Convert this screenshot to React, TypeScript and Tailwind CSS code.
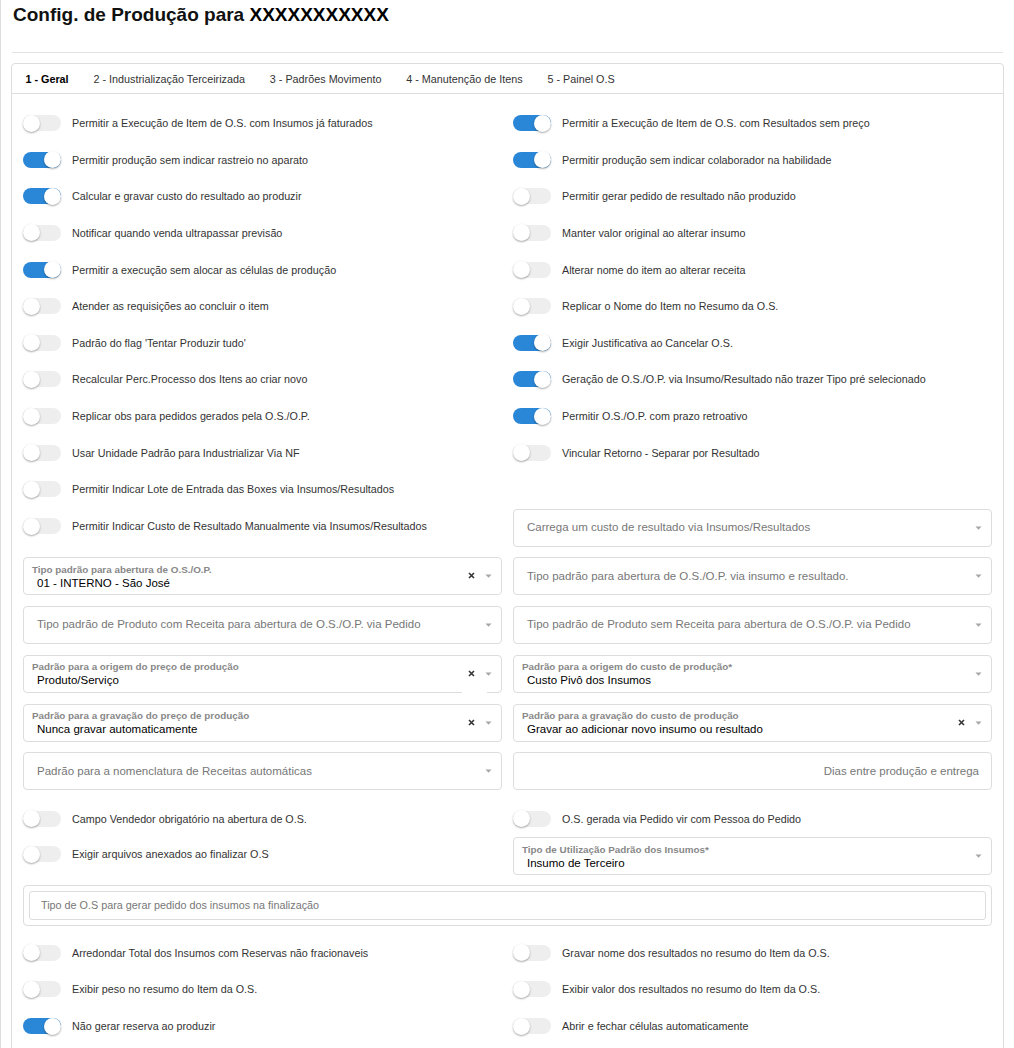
import React from 'react';

type Opt = { on?: boolean; text: string };

function Toggle({ on }: { on?: boolean }) {
  return (
    <span
      className={`relative inline-block h-4 w-[38px] shrink-0 rounded-full ${on ? 'bg-[#2a87d7]' : 'bg-[#eeeeee]'}`}
    >
      <span
        className={`absolute top-[-0.5px] h-[17px] w-[17px] rounded-full bg-white shadow-[0_1px_2px_rgba(0,0,0,0.35)] ${on ? 'right-0' : 'left-0'}`}
      />
    </span>
  );
}

function ToggleItem({ on, text }: Opt) {
  return (
    <div className="flex items-center gap-[11px]">
      <Toggle on={on} />
      <span className="text-[10.75px] leading-[14px] text-[#333]">{text}</span>
    </div>
  );
}

function Caret() {
  return (
    <svg width="7" height="4" viewBox="0 0 7 4" className="shrink-0">
      <path d="M0.5 0.5h6L3.5 3.8z" fill="#a6a6a6" />
    </svg>
  );
}

function Clear() {
  return (
    <svg width="7" height="7" viewBox="0 0 7 7" className="shrink-0">
      <path d="M1 1l5 5M6 1L1 6" stroke="#333" strokeWidth="1.6" />
    </svg>
  );
}

function Select({
  label,
  value,
  placeholder,
  clear,
  patch,
}: {
  label?: string;
  value?: string;
  placeholder?: string;
  clear?: boolean;
  patch?: boolean;
}) {
  return (
    <div className="relative flex h-[38px] items-center rounded-[4px] border border-[#dddddd] bg-white pr-[9px]">
      {label ? (
        <div className="flex min-w-0 flex-1 flex-col pt-[1px]">
          <span className="pl-[8px] text-[9.85px] font-bold leading-[12px] text-[#888]">{label}</span>
          <span className="pl-[13px] text-[11.5px] leading-[14px] text-black">{value}</span>
        </div>
      ) : (
        <span className="flex-1 pl-[13px] text-[11.5px] text-[#777]">{placeholder}</span>
      )}
      {clear && (
        <span className="mr-[10px] mt-[-1px] flex">
          <Clear />
        </span>
      )}
      <Caret />
      {patch && <div className="absolute bottom-[-1px] right-[14px] h-[3px] w-[25px] bg-white" />}
    </div>
  );
}

function Row({ children, className = '' }: { children: React.ReactNode; className?: string }) {
  return <div className={`grid grid-cols-2 gap-x-[11px] ${className}`}>{children}</div>;
}

const left: Opt[] = [
  { text: 'Permitir a Execução de Item de O.S. com Insumos já faturados' },
  { on: true, text: 'Permitir produção sem indicar rastreio no aparato' },
  { on: true, text: 'Calcular e gravar custo do resultado ao produzir' },
  { text: 'Notificar quando venda ultrapassar previsão' },
  { on: true, text: 'Permitir a execução sem alocar as células de produção' },
  { text: 'Atender as requisições ao concluir o item' },
  { text: "Padrão do flag 'Tentar Produzir tudo'" },
  { text: 'Recalcular Perc.Processo dos Itens ao criar novo' },
  { text: 'Replicar obs para pedidos gerados pela O.S./O.P.' },
  { text: 'Usar Unidade Padrão para Industrializar Via NF' },
  { text: 'Permitir Indicar Lote de Entrada das Boxes via Insumos/Resultados' },
];

const right: (Opt | null)[] = [
  { on: true, text: 'Permitir a Execução de Item de O.S. com Resultados sem preço' },
  { on: true, text: 'Permitir produção sem indicar colaborador na habilidade' },
  { text: 'Permitir gerar pedido de resultado não produzido' },
  { text: 'Manter valor original ao alterar insumo' },
  { text: 'Alterar nome do item ao alterar receita' },
  { text: 'Replicar o Nome do Item no Resumo da O.S.' },
  { on: true, text: 'Exigir Justificativa ao Cancelar O.S.' },
  { on: true, text: 'Geração de O.S./O.P. via Insumo/Resultado não trazer Tipo pré selecionado' },
  { on: true, text: 'Permitir O.S./O.P. com prazo retroativo' },
  { text: 'Vincular Retorno - Separar por Resultado' },
  null,
];

const bottom: [Opt, Opt][] = [
  [
    { text: 'Arredondar Total dos Insumos com Reservas não fracionaveis' },
    { text: 'Gravar nome dos resultados no resumo do Item da O.S.' },
  ],
  [
    { text: 'Exibir peso no resumo do Item da O.S.' },
    { text: 'Exibir valor dos resultados no resumo do Item da O.S.' },
  ],
  [{ on: true, text: 'Não gerar reserva ao produzir' }, { text: 'Abrir e fechar células automaticamente' }],
];

const tabs = [
  '1 - Geral',
  '2 - Industrialização Terceirizada',
  '3 - Padrões Movimento',
  '4 - Manutenção de Itens',
  '5 - Painel O.S',
];

export default function App() {
  return (
    <div className="min-h-[1048px] border-l border-[#dddddd] bg-white px-[10px] font-['Liberation_Sans',Arial,sans-serif]">
      <h4 className="pl-[2px] pt-[4px] text-[19px] font-bold leading-[22px] text-[#111]">
        Config. de Produção para <span className="text-black">XXXXXXXXXXX</span>
      </h4>
      <hr className="mx-[1px] mt-[26px] border-t border-[#e3e3e3]" />

      {/* Card */}
      <div className="mt-[10px] rounded-t-[4px] border border-[#dddddd]">
        <div className="flex h-[30px] items-center border-b border-[#dddddd] pl-[1px] pt-[1px]">
          {tabs.map((t, i) => (
            <span
              key={t}
              className={`px-[12.4px] text-[10.8px] ${i === 0 ? 'font-bold text-black' : 'text-[#333]'}`}
            >
              {t}
            </span>
          ))}
        </div>

        <div className="px-[11px] pb-[20px] pt-[10.7px]">
          {left.map((l, i) => (
            <Row key={i} className="h-[36.64px] items-center">
              <ToggleItem {...l} />
              {right[i] ? <ToggleItem {...(right[i] as Opt)} /> : <div />}
            </Row>
          ))}

          <Row className="mb-[10.7px] mt-[1px] items-center">
            <div className="-mt-[3px]">
              <ToggleItem text="Permitir Indicar Custo de Resultado Manualmente via Insumos/Resultados" />
            </div>
            <Select placeholder="Carrega um custo de resultado via Insumos/Resultados" />
          </Row>

          <Row className="mb-[10.75px]">
            <Select label="Tipo padrão para abertura de O.S./O.P." value="01 - INTERNO - São José" clear />
            <Select placeholder="Tipo padrão para abertura de O.S./O.P. via insumo e resultado." />
          </Row>
          <Row className="mb-[10.75px]">
            <Select placeholder="Tipo padrão de Produto com Receita para abertura de O.S./O.P. via Pedido" />
            <Select placeholder="Tipo padrão de Produto sem Receita para abertura de O.S./O.P. via Pedido" />
          </Row>
          <Row className="mb-[10.75px]">
            <Select label="Padrão para a origem do preço de produção" value="Produto/Serviço" clear patch />
            <Select label="Padrão para a origem do custo de produção*" value="Custo Pivô dos Insumos" />
          </Row>
          <Row className="mb-[10.75px]">
            <Select label="Padrão para a gravação do preço de produção" value="Nunca gravar automaticamente" clear />
            <Select
              label="Padrão para a gravação do custo de produção"
              value="Gravar ao adicionar novo insumo ou resultado"
              clear
            />
          </Row>
          <Row className="mb-[10.5px]">
            <Select placeholder="Padrão para a nomenclatura de Receitas automáticas" />
            <div className="flex h-[38px] items-center justify-end rounded-[4px] border border-[#dddddd] pr-[12px] text-[11.5px] text-[#777]">
              Dias entre produção e entrega
            </div>
          </Row>

          <Row className="h-[36.4px] items-center">
            <ToggleItem text="Campo Vendedor obrigatório na abertura de O.S." />
            <ToggleItem text="O.S. gerada via Pedido vir com Pessoa do Pedido" />
          </Row>
          <Row className="mb-[9.5px] items-start">
            <div className="flex h-[34px] items-center">
              <ToggleItem text="Exigir arquivos anexados ao finalizar O.S" />
            </div>
            <Select label="Tipo de Utilização Padrão dos Insumos*" value="Insumo de Terceiro" />
          </Row>

          <div className="mb-[8.5px] rounded-[4px] border border-[#dddddd] p-[5px]">
            <div className="flex h-[29px] items-center rounded-[3px] border border-[#dddddd] pl-[11px] text-[10.8px] text-[#777]">
              Tipo de O.S para gerar pedido dos insumos na finalização
            </div>
          </div>

          {bottom.map(([a, b], i) => (
            <Row key={i} className="h-[36.8px] items-center">
              <ToggleItem {...a} />
              <ToggleItem {...b} />
            </Row>
          ))}
        </div>
      </div>
    </div>
  );
}
